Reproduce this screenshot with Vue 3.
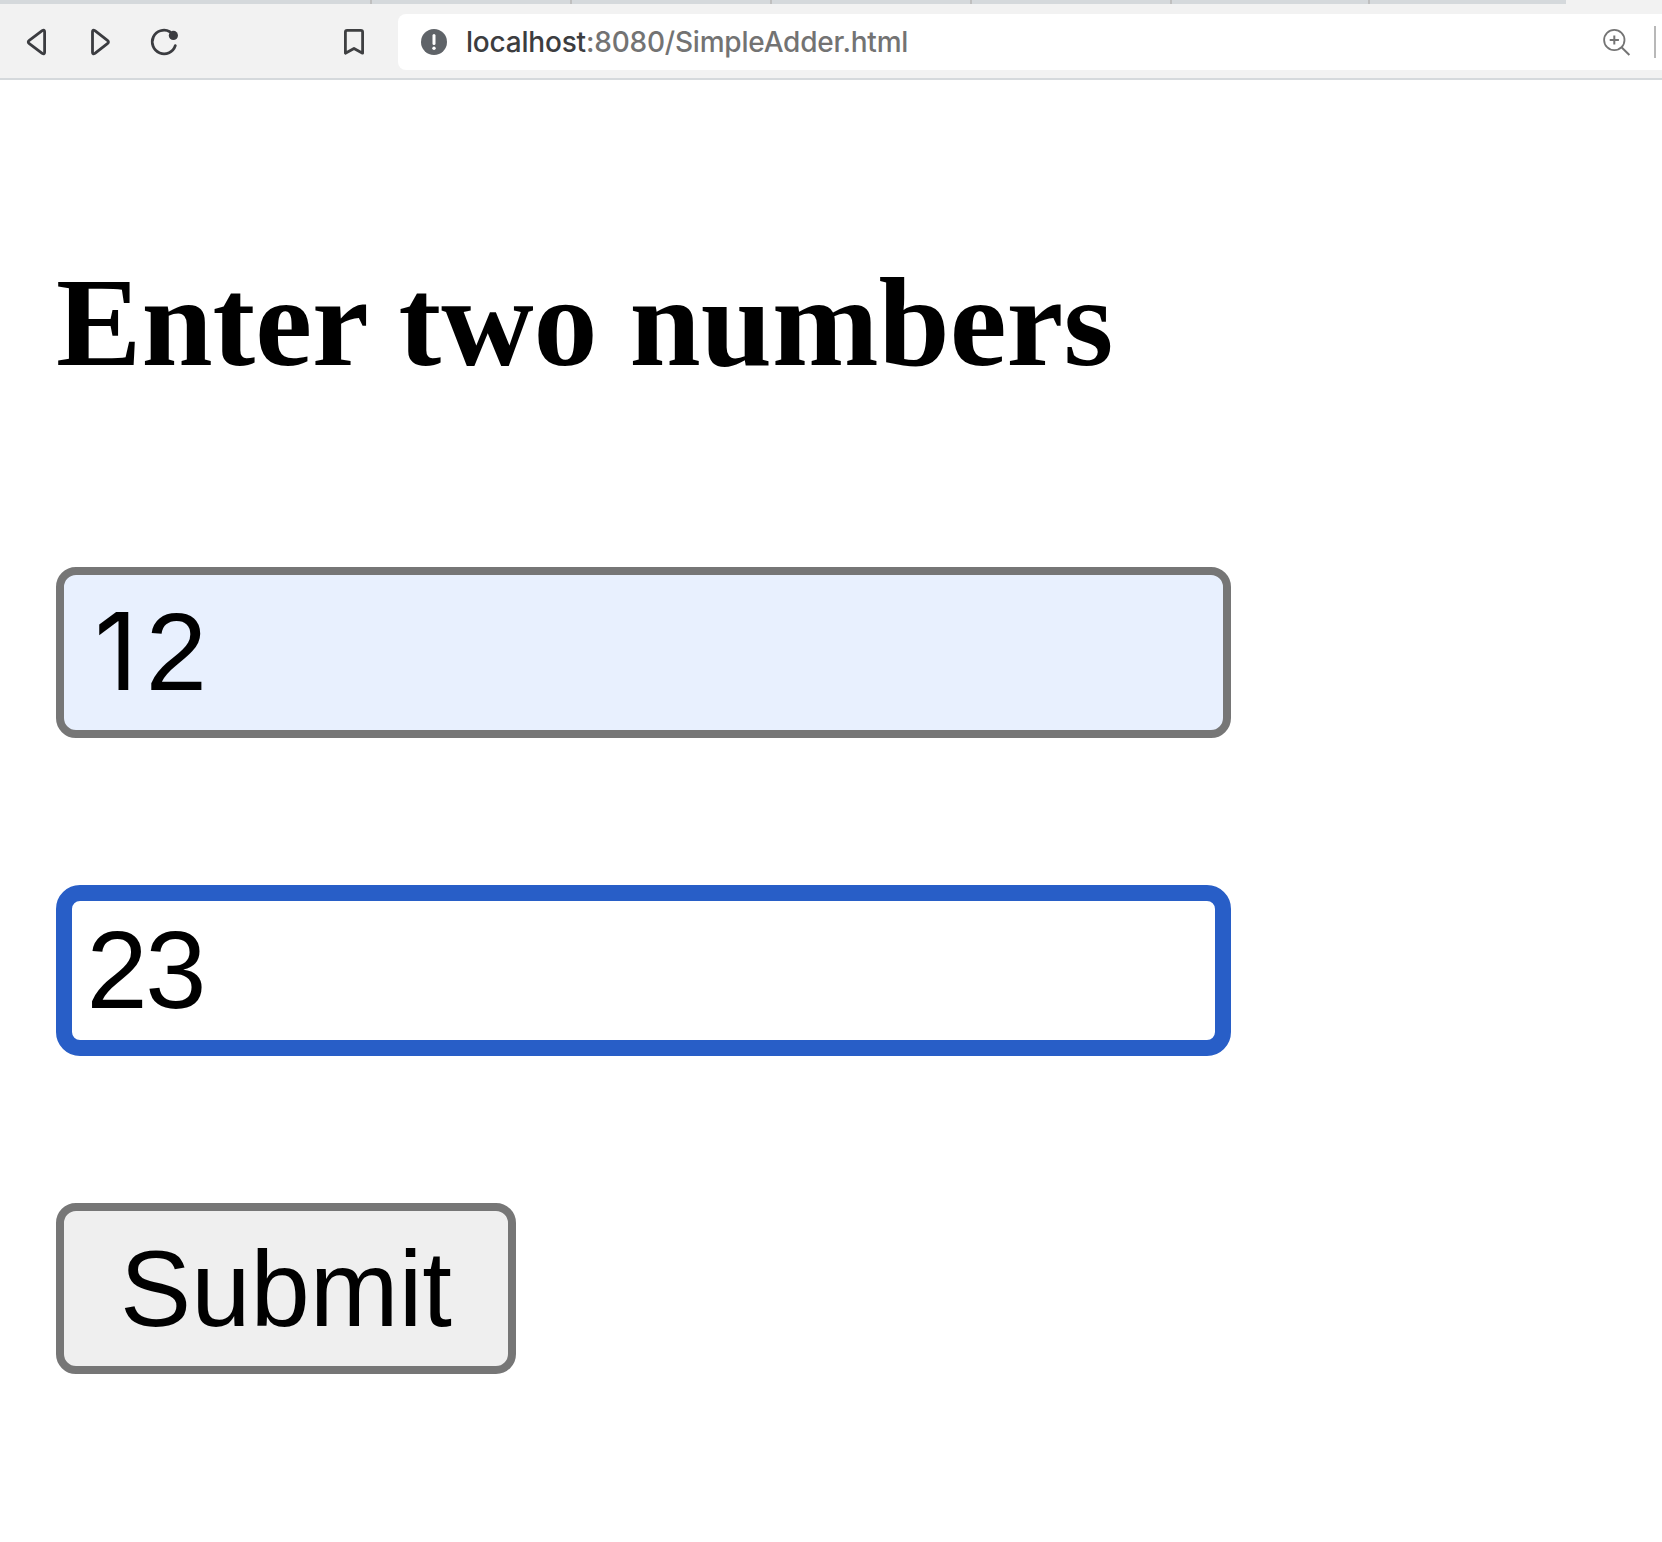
<script setup>
import { ref } from 'vue'

const tabs = [372, 200, 200, 200, 200, 198, 196]
const first = ref(['1', '2'])
const second = ref('23')
</script>

<template>
  <div class="browser">
    <header>
      <div class="tabs">
        <span v-for="(width, i) in tabs" :key="i" class="tab" :style="{ width: width + 'px' }"></span>
      </div>
      <nav class="toolbar">
        <svg class="tools" width="398" height="74" viewBox="0 4 398 74" fill="none" stroke="#3b3c40" stroke-width="2.8" stroke-linejoin="round" stroke-linecap="round">
          <path d="M42.2 30.6Q44.6 29.2 44.6 31.7V52.3Q44.6 54.8 42.2 53.4L29.3 43.6Q27.2 42 29.3 40.4Z" />
          <path d="M94.9 30.6Q92.5 29.2 92.5 31.7V52.3Q92.5 54.8 94.9 53.4L107.4 43.6Q109.5 42 107.4 40.4Z" />
          <path d="M169.8 31.7A11.8 11.8 0 1 0 175.3 45.6" />
          <circle cx="173.4" cy="35.4" r="4.6" fill="#3b3c40" stroke="none" />
          <path d="M345.4 53.2V32Q345.4 30.3 347.1 30.3H360.8Q362.6 30.3 362.6 32V53.2L354 48.5Z" stroke="#3f4042" />
        </svg>
        <div class="address">
          <svg width="26" height="26" viewBox="0 0 26 26">
            <circle cx="13" cy="13" r="13" fill="#5f6368" />
            <path d="M13 6.5V14.5" stroke="#fff" stroke-width="3" stroke-linecap="round" />
            <circle cx="13" cy="19.3" r="1.7" fill="#fff" />
          </svg>
          <div class="url"><span class="host">localhost</span><span class="path">:8080/SimpleAdder.html</span></div>
          <svg class="zoom" width="28" height="28" viewBox="0 0 28 28" fill="none" stroke="#747474" stroke-width="1.8">
            <circle cx="11.3" cy="12" r="10.2" />
            <path d="M18.5 19.2L26.4 27M11.3 7.4V16.6M6.7 12H15.9" stroke-width="2" />
          </svg>
          <span class="divider"></span>
        </div>
      </nav>
    </header>
    <main>
      <h1>Enter two numbers</h1>
      <div class="field autofill"><span class="one">{{ first[0] }}</span><span>{{ first[1] }}</span></div>
      <div class="field focused">{{ second }}</div>
      <button type="submit">Submit</button>
    </main>
  </div>
</template>

<style>
body {
  margin: 0;
  background: #fff;
}
</style>

<style scoped>
.browser {
  width: 1662px;
  height: 1542px;
  overflow: hidden;
  background: #fff;
}
header {
  box-sizing: border-box;
  height: 80px;
  background: #f2f2f2;
  border-bottom: 2px solid #d5d9dc;
}
.tabs {
  display: flex;
  height: 4px;
}
.tab {
  box-sizing: border-box;
  background: #d5d9dc;
  border-right: 2px solid #bfbfbf;
}
.tab:last-child {
  border: 0;
}
.toolbar {
  display: flex;
  height: 74px;
}
.tools {
  flex: none;
}
.address {
  display: flex;
  align-items: center;
  box-sizing: border-box;
  flex: 1;
  height: 56px;
  margin-top: 10px;
  padding: 0 6px 0 23px;
  background: #fff;
  border-radius: 8px 0 0 8px;
}
.url {
  margin-left: 19px;
  font: 450 28px/56px Inter, sans-serif;
  letter-spacing: -0.2px;
  white-space: nowrap;
}
.host {
  color: #3c3d3f;
}
.path {
  color: #737373;
}
.zoom {
  margin-left: auto;
}
.divider {
  width: 2px;
  height: 32px;
  margin-left: 23px;
  background: #b8b8b8;
}
main {
  display: flex;
  flex-direction: column;
  align-items: flex-start;
  padding: 169px 0 0 56px;
}
h1 {
  margin: 0 0 171px;
  font: bold 128px/147px "Liberation Serif", serif;
  white-space: nowrap;
}
.field,
button {
  box-sizing: border-box;
  height: 171px;
  border: 8px solid #767676;
  border-radius: 20px;
  color: #000;
  font: 106.667px/157px "Liberation Sans", sans-serif;
}
.field {
  display: flex;
  align-items: baseline;
  width: 1175px;
  padding-left: 23px;
  margin-bottom: 147px;
  font-size: 110px;
  letter-spacing: -2.4px;
  line-height: 154px;
}
.autofill {
  background: #e8f0fe;
}
.one {
  box-sizing: border-box;
  width: 58.7px;
  padding-right: 8px;
  font-family: Inter, sans-serif;
  font-size: 106.667px;
  letter-spacing: 0;
  text-align: right;
}
.focused {
  border: 16px solid #285ec7;
  border-radius: 24px;
  padding-left: 14.5px;
  line-height: 138px;
}
button {
  width: 460px;
  padding: 0;
  background: #efefef;
}
</style>
